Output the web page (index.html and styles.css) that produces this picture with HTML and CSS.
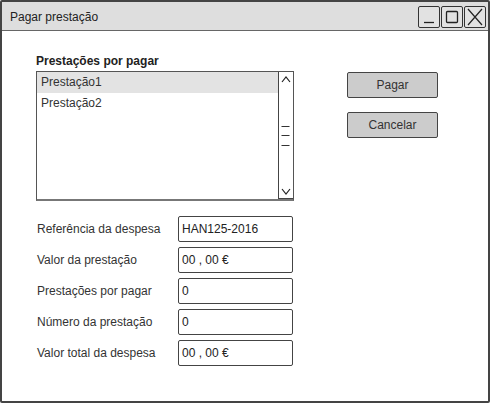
FILE: index.html
```html
<!DOCTYPE html>
<html lang="pt">
<head>
<meta charset="utf-8">
<title>Pagar prestação</title>
<link rel="stylesheet" href="styles.css">
</head>
<body>
<div class="window">
  <div class="titlebar">
    <span class="title">Pagar prestação</span>
    <div class="winbtns">
      <span class="winbtn"><svg width="20" height="20" viewBox="0 0 20 20"><path d="M5 15.5 H15" stroke="#222" stroke-width="1.3" fill="none"/></svg></span>
      <span class="winbtn"><svg width="20" height="20" viewBox="0 0 20 20"><rect x="4.5" y="4.5" width="11" height="11" rx="1" stroke="#222" stroke-width="1.3" fill="none"/></svg></span>
      <span class="winbtn"><svg width="20" height="20" viewBox="0 0 20 20"><path d="M3 2 L17 18 M17 2 L3 18" stroke="#222" stroke-width="1.2" fill="none"/></svg></span>
    </div>
  </div>
  <div class="content">
    <div class="top">
      <div class="listcol">
        <div class="listlabel">Prestações por pagar</div>
        <div class="listbox">
          <div class="items">
            <div class="item selected">Prestação1</div>
            <div class="item">Prestação2</div>
          </div>
          <div class="scrollbar">
            <svg class="arrow" width="14" height="12" viewBox="0 0 14 12"><path d="M3 8 L7 3 L11 8" stroke="#222" stroke-width="1.2" fill="none"/></svg>
            <svg class="grip" width="14" height="26" viewBox="0 0 14 26"><path d="M2.5 3.5 H10.5 M2.5 12.5 H10.5 M2.5 22.5 H10.5" stroke="#333" stroke-width="1" fill="none"/></svg>
            <svg class="arrow" width="14" height="12" viewBox="0 0 14 12"><path d="M3 4 L7 9 L11 4" stroke="#222" stroke-width="1.2" fill="none"/></svg>
          </div>
        </div>
      </div>
      <div class="btncol">
        <button class="btn">Pagar</button>
        <button class="btn">Cancelar</button>
      </div>
    </div>
    <div class="form">
      <div class="row"><span class="lbl">Referência da despesa</span><span class="field">HAN125-2016</span></div>
      <div class="row"><span class="lbl">Valor da prestação</span><span class="field">00 , 00 €</span></div>
      <div class="row"><span class="lbl">Prestações por pagar</span><span class="field">0</span></div>
      <div class="row"><span class="lbl">Número da prestação</span><span class="field">0</span></div>
      <div class="row"><span class="lbl">Valor total da despesa</span><span class="field">00 , 00 €</span></div>
    </div>
  </div>
</div>
</body>
</html>
```
FILE: styles.css
```css
html, body {
  margin: 0;
  padding: 0;
  background: #fff;
}
body {
  font-family: "Liberation Sans", "DejaVu Sans", sans-serif;
  font-size: 12px;
  color: #333;
}
.window {
  width: 490px;
  height: 403px;
  box-sizing: border-box;
  border: 2px solid #444;
  border-radius: 2px;
  display: flex;
  flex-direction: column;
}
.titlebar {
  height: 29px;
  box-sizing: border-box;
  background: #dedede;
  border-bottom: 1px solid #666;
  display: flex;
  align-items: center;
  justify-content: space-between;
  padding: 0 2px 0 8px;
}
.title {
  font-size: 12px;
  color: #222;
  margin-top: 2px;
}
.winbtns {
  display: flex;
  gap: 1px;
  margin-top: 1px;
}
.winbtn {
  width: 22px;
  height: 22px;
  box-sizing: border-box;
  border: 1px solid #333;
  border-radius: 2px;
  display: flex;
  align-items: center;
  justify-content: center;
  background: #e2e2e2;
}
.content {
  padding: 22px 0 0 34px;
}
.top {
  display: flex;
}
.listcol {
  width: 258px;
}
.listlabel {
  font-weight: bold;
  line-height: 16px;
  margin-bottom: 2px;
  color: #222;
}
.listbox {
  height: 130px;
  box-sizing: border-box;
  border: 1px solid #555;
  border-bottom: 2px solid #777;
  display: flex;
}
.items {
  flex: 1;
}
.item {
  height: 20px;
  line-height: 20px;
  padding-left: 4px;
}
.item.selected {
  background: #e3e3e3;
  height: 21px;
  line-height: 21px;
}
.scrollbar {
  width: 15px;
  box-sizing: border-box;
  border-left: 1px solid #444;
  border-bottom: 1px solid #444;
  display: flex;
  flex-direction: column;
  align-items: center;
  justify-content: space-between;
  padding: 2px 0 1px;
}
.grip {
  display: block;
}
.btncol {
  margin-left: 53px;
  padding-top: 19px;
  display: flex;
  flex-direction: column;
  gap: 14px;
}
.btn {
  width: 91px;
  height: 26px;
  box-sizing: border-box;
  border: 1px solid #444;
  border-radius: 2px;
  background: #cccccc;
  font-family: "Liberation Sans", "DejaVu Sans", sans-serif;
  font-size: 12px;
  color: #333;
  padding: 0;
}
.form {
  margin-top: 15px;
  display: flex;
  flex-direction: column;
  gap: 5px;
}
.row {
  display: flex;
  align-items: center;
  height: 26px;
}
.lbl {
  width: 141px;
  padding-left: 1px;
}
.field {
  width: 115px;
  height: 26px;
  box-sizing: border-box;
  border: 1px solid #444;
  border-radius: 2px;
  line-height: 24px;
  padding-left: 3px;
  color: #222;
}
```
